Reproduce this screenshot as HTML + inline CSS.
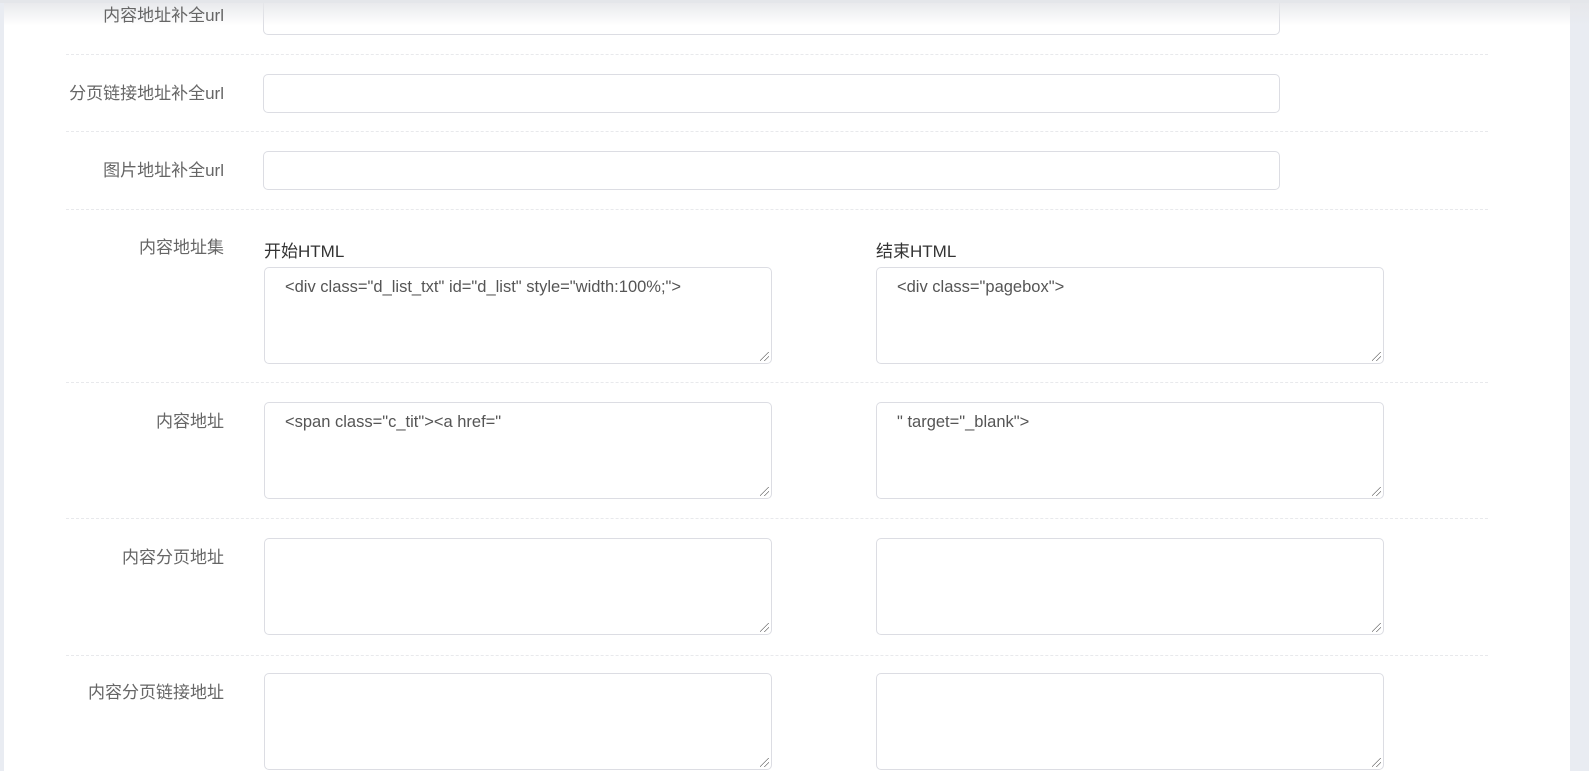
<!DOCTYPE html>
<html><head><meta charset="utf-8"><style>
body{margin:0;width:1589px;height:771px;overflow:hidden;background:#e9ecf2;font-family:"Liberation Sans","Noto Sans CJK SC",sans-serif;position:relative}
.main{position:absolute;left:4px;top:0;width:1566px;height:771px;background:#fff}
.shadow{position:absolute;left:4px;top:0;width:1585px;height:26px;background:linear-gradient(#e6e7ea,rgba(255,255,255,0));}
.top{position:absolute;left:0;top:0;width:1589px;height:3px;background:#e4e6ea}
.lab{position:absolute;right:1365px;font-size:17px;color:#666;line-height:20px;white-space:nowrap}
.inp{position:absolute;left:263px;width:1015px;height:37px;border:1px solid #dcdde3;border-radius:5px;background:#fff}
.sep{position:absolute;left:66px;width:1422px;border-top:1px dashed #e8e9ec}
.ta{position:absolute;width:508px;height:95px;border:1px solid #dcdde3;border-radius:5px;background:#fff;box-sizing:border-box}
.ta span{position:absolute;left:20px;top:10px;font-size:16.5px;color:#555;white-space:nowrap}
.ta i{position:absolute;right:2px;bottom:2px;width:9px;height:9px;background:linear-gradient(135deg,transparent 45%,#777 45%,#777 52%,transparent 52%,transparent 70%,#777 70%,#777 77%,transparent 77%)}
.h{position:absolute;font-size:17px;color:#333;top:237px}
</style></head><body>
<div class="main"></div>
<div class="inp" style="top:-4px"></div>
<div class="shadow"></div>
<div class="top"></div>
<div class="lab" style="top:6px">内容地址补全url</div>
<div class="sep" style="top:54px"></div>
<div class="lab" style="top:84px">分页链接地址补全url</div>
<div class="inp" style="top:74px"></div>
<div class="sep" style="top:131px"></div>
<div class="lab" style="top:161px">图片地址补全url</div>
<div class="inp" style="top:151px"></div>
<div class="sep" style="top:209px"></div>
<div class="lab" style="top:238px">内容地址集</div>
<div class="h" style="left:264px">开始HTML</div>
<div class="h" style="left:876px">结束HTML</div>
<div class="ta" style="left:264px;top:267px;height:97px"><span>&lt;div class="d_list_txt" id="d_list" style="width:100%;"&gt;</span><i></i></div>
<div class="ta" style="left:876px;top:267px;height:97px"><span>&lt;div class="pagebox"&gt;</span><i></i></div>
<div class="sep" style="top:382px"></div>
<div class="lab" style="top:412px">内容地址</div>
<div class="ta" style="left:264px;top:402px;height:97px"><span>&lt;span class="c_tit"&gt;&lt;a href="</span><i></i></div>
<div class="ta" style="left:876px;top:402px;height:97px"><span>" target="_blank"&gt;</span><i></i></div>
<div class="sep" style="top:518px"></div>
<div class="lab" style="top:548px">内容分页地址</div>
<div class="ta" style="left:264px;top:538px;height:97px"><i></i></div>
<div class="ta" style="left:876px;top:538px;height:97px"><i></i></div>
<div class="sep" style="top:655px"></div>
<div class="lab" style="top:683px">内容分页链接地址</div>
<div class="ta" style="left:264px;top:673px;height:97px"><i></i></div>
<div class="ta" style="left:876px;top:673px;height:97px"><i></i></div>
</body></html>
